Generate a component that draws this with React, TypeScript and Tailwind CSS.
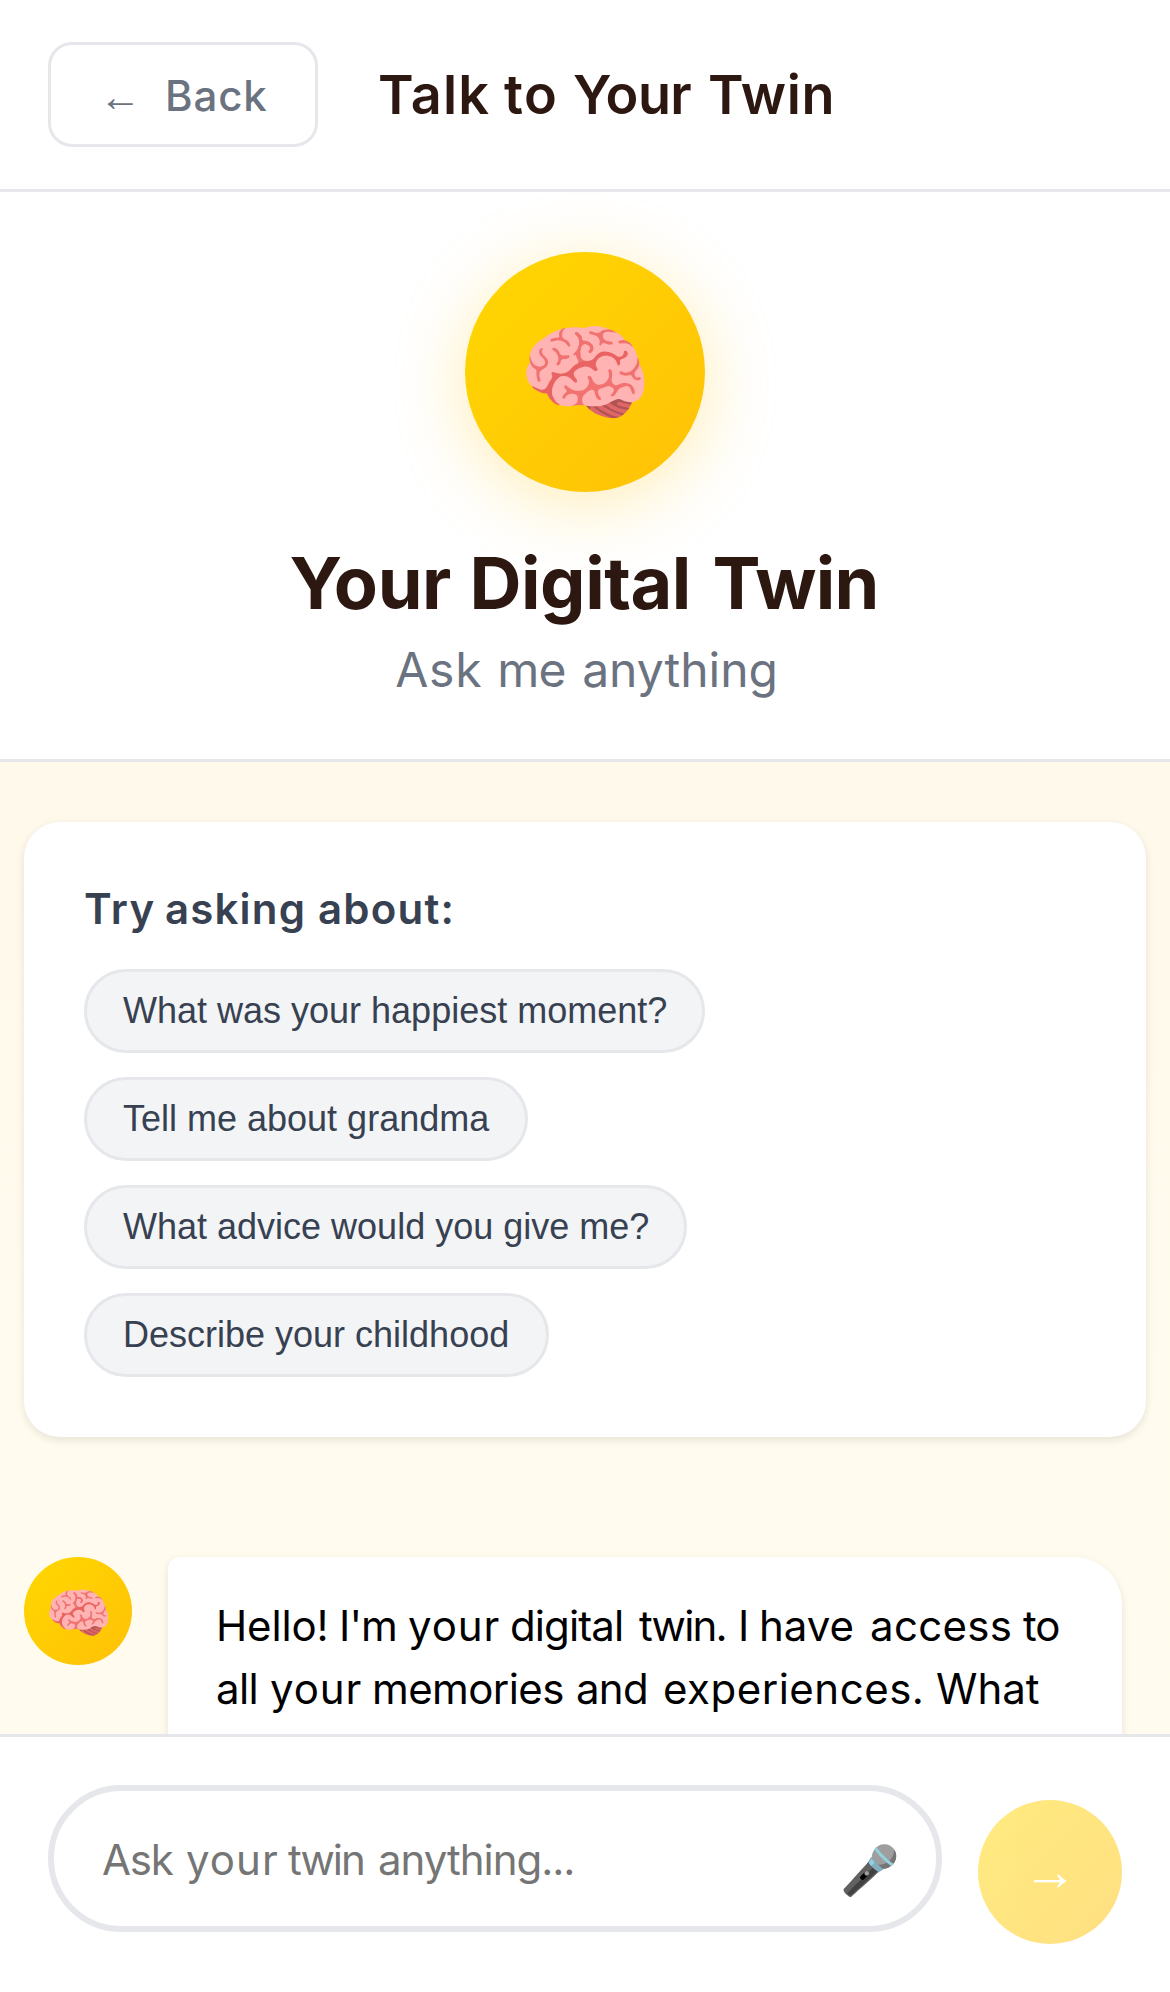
type Word = [text: string, spacing: string];

const title: Word[] = [
  ["Talk", "w-[42px] tracking-[0.38px]"],
  ["to", "w-[23px] tracking-[0.45px]"],
  ["Your", "w-[45px] tracking-[-0.2px]"],
  ["Twin", "tracking-[0.2px]"],
];
const name: Word[] = [
  ["Your", "w-[60px] tracking-[-0.13px]"],
  ["Digital", "w-[81px] tracking-[-0.15px]"],
  ["Twin", "w-[56px] tracking-[-0.25px]"],
];
const tagline: Word[] = [
  ["Ask", "w-[34px] tracking-[0.25px]"],
  ["me", "w-[28.3px] tracking-[-0.3px]"],
  ["anything", "w-[64.2px]"],
];
const suggestionsTitle: Word[] = [
  ["Try", "w-[27px] tracking-[0.45px]"],
  ["asking", "w-[51px] tracking-[0.39px]"],
  ["about:", "tracking-[0.4px]"],
];
const greeting: Word[][] = [
  [
    ["Hello!", "w-[41px] tracking-[-0.05px]"],
    ["I'm", "w-[23px] tracking-[-0.3px]"],
    ["your", "w-[34px] tracking-[0.3px]"],
    ["digital", "w-[43px] tracking-[-0.3px]"],
    ["twin.", "w-[33px] tracking-[-0.6px]"],
    ["I", "w-[7px]"],
    ["have", "w-[37px]"],
    ["access", "w-[51px] tracking-[0.1px]"],
    ["to", "tracking-[-0.4px]"],
  ],
  [
    ["all", "w-[18px] tracking-[-0.2px]"],
    ["your", "w-[34px] tracking-[0.3px]"],
    ["memories", "w-[68px] tracking-[-0.2px]"],
    ["and", "w-[29px] tracking-[-0.25px]"],
    ["experiences.", "w-[91px] tracking-[0.17px]"],
    ["What", ""],
  ],
];
const placeholder: Word[] = [
  ["Ask", "w-[28px] tracking-[-0.4px]"],
  ["your", "w-[34px] tracking-[0.35px]"],
  ["twin", "w-[30px] tracking-[-0.65px]"],
  ["anything...", "tracking-[-0.34px]"],
];
const chips = [
  "What was your happiest moment?",
  "Tell me about grandma",
  "What advice would you give me?",
  "Describe your childhood",
];

function Words({ words }: { words: Word[] }) {
  return (
    <span className="flex whitespace-pre">
      {words.map(([text, spacing], i) => (
        <span key={i} className={spacing}>
          {i < words.length - 1 ? text + " " : text}
        </span>
      ))}
    </span>
  );
}

export default function App() {
  return (
    <div className="h-[1992px] w-[1170px] overflow-hidden">
      <div className="flex h-[664px] w-[390px] origin-top-left scale-300 flex-col overflow-hidden bg-linear-to-b from-[#fff6e8] to-[#fffdf0] font-['Inter',sans-serif] text-black">
        <header className="flex h-16 shrink-0 items-center gap-5 border-b border-[#e5e7eb] bg-white px-4">
          <button className="flex h-[35px] w-[90px] items-center gap-2 rounded-lg border border-[#e5e7eb] px-4 text-sm font-medium text-[#6b7280]">
            <span className="font-['Liberation_Sans',sans-serif]">←</span>
            <span className="tracking-[0.3px]">Back</span>
          </button>
          <h1 className="text-lg font-semibold text-[#2c1810]">
            <Words words={title} />
          </h1>
        </header>
        <section className="flex h-[190px] shrink-0 flex-col items-center border-b border-[#e5e7eb] bg-white pt-5">
          <div className="flex size-20 items-center justify-center rounded-full bg-linear-135 from-[#ffd700] to-[#ffc107] text-4xl shadow-[0_4px_24px_rgba(255,193,7,0.3)]">
            🧠
          </div>
          <h2 className="mt-4 text-2xl leading-[29px] font-bold text-[#2c1810]">
            <Words words={name} />
          </h2>
          <p className="mt-1 text-base leading-5 text-[#6b7280]">
            <Words words={tagline} />
          </p>
        </section>
        <main className="min-h-0 flex-1 overflow-hidden px-2 pt-5">
          <div className="flex h-[205px] flex-col items-start gap-2 rounded-xl bg-white px-5 pt-5 shadow-[0_1px_3px_rgba(0,0,0,0.1)]">
            <h3 className="mb-1 text-sm leading-[17px] font-semibold text-[#374151]">
              <Words words={suggestionsTitle} />
            </h3>
            {chips.map((chip) => (
              <button
                key={chip}
                className="h-7 rounded-full border border-[#e5e7eb] bg-[#f3f4f6] px-3 font-['Liberation_Sans',sans-serif] text-xs text-[#374151]"
              >
                {chip}
              </button>
            ))}
          </div>
          <div className="mt-10 flex gap-3">
            <div className="flex size-9 shrink-0 items-center justify-center rounded-full bg-linear-135 from-[#ffd700] to-[#ffc107] pt-0.5 text-lg">
              🧠
            </div>
            <div className="h-[87px] w-[318px] rounded-2xl rounded-tl bg-white px-4 py-3 text-sm leading-[21px] shadow-[0_1px_3px_rgba(0,0,0,0.1)]">
              {greeting.map((line, i) => (
                <Words key={i} words={line} />
              ))}
            </div>
          </div>
        </main>
        <footer className="flex h-[86px] shrink-0 items-end gap-3 border-t border-[#e5e7eb] bg-white p-4">
          <div className="mb-1 flex h-[49px] w-[298px] items-center justify-between rounded-full border-2 border-[#e5e7eb] pr-3 pl-4 text-sm text-[#757575]">
            <Words words={placeholder} />
            <span className="pt-1.5 text-base">🎤</span>
          </div>
          <button className="flex size-12 items-center justify-center rounded-full bg-linear-135 from-[#ffd700] to-[#ffc107] font-['Liberation_Sans',sans-serif] text-lg text-white opacity-50">
            →
          </button>
        </footer>
      </div>
    </div>
  );
}
